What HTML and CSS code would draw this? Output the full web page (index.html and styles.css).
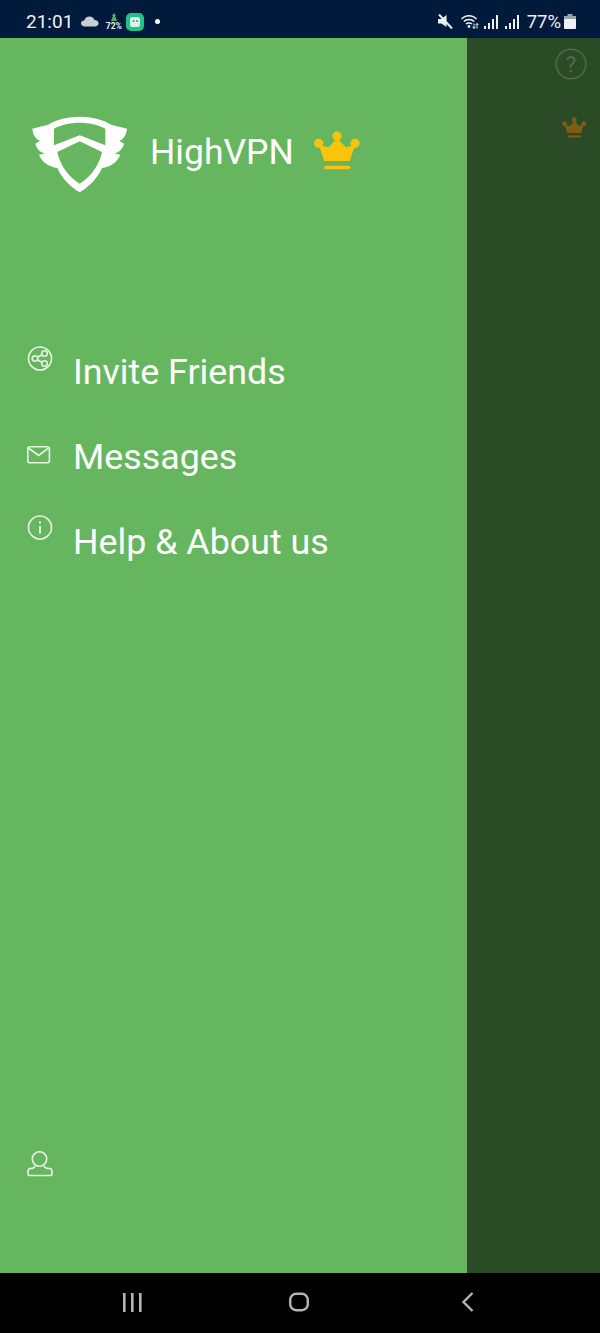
FILE: index.html
```html
<!DOCTYPE html>
<html lang="en">
<head>
	<meta charset="UTF-8">
	<meta name="viewport" content="width=device-width, initial-scale=1">

	<title>HighVPN</title>

	<link rel="stylesheet" href="styles.css">
</head>
<body>
	<svg class="defs" width="0" height="0">
		<symbol id="crown" viewBox="0 0 47 39">
			<circle cx="4.7" cy="12.3" r="4.6" />
			<circle cx="23" cy="5" r="4.6" />
			<circle cx="41" cy="12.3" r="4.6" />
			<path d="M5 14 L14.7 16.5 L23 7 L32 16.5 L41 14 L35.8 30 L10 30 Z" />
			<rect x="10.3" y="34.7" width="26" height="3.6" rx="1.5" />
		</symbol>
	</svg>

	<!-- status bar -->
	<div class="status">
		<span class="clock">21:01</span>
		<svg class="cloud" width="18" height="11" viewBox="0 0 18 11">
			<path fill="#c9ced4" d="M4 10.5 C1.5 10.5 0 9 0 7.3 C0 5.6 1.4 4.4 3.2 4.4 C4 2 6 .6 8.5 .6 C11 .6 12.8 2 13.4 4 C15.8 3.9 17.6 5.4 17.6 7.3 C17.6 9.2 16 10.5 14 10.5 Z" />
		</svg>
		<div class="rain">
			<svg width="8" height="9" viewBox="0 0 8 9">
				<path fill="#4fb06a" d="M4 0 L6 3 L5 3 L7 8 L1 8 L3 3 L2 3 Z" />
			</svg>
			<span>72%</span>
		</div>
		<svg class="app" width="18" height="18" viewBox="0 0 18 18">
			<rect width="18" height="18" rx="5" fill="#25c08a" />
			<rect x="4" y="4" width="10" height="10" rx="2.5" fill="#d8f5e8" />
			<circle cx="7.5" cy="8" r="1" fill="#25a078" />
			<circle cx="11" cy="8" r="1" fill="#25a078" />
		</svg>
		<span class="dot"></span>

		<div class="status-right">
			<svg width="15" height="15" viewBox="0 0 15 15">
				<path fill="#eef1f4" d="M0 5 H3.5 L8.5 1 V13 L3.5 9.5 H0 Z" />
				<path stroke="#eef1f4" stroke-width="2" d="M1 .5 L14 14.5" />
			</svg>
			<svg class="wifi" width="18" height="15" viewBox="0 0 18 15" fill="none" stroke="#eef1f4" stroke-width="1.5">
				<path d="M.5 5 C4.5 .5 11.5 .5 15.5 5" />
				<path d="M2.8 7.5 C5.5 4.8 10.5 4.8 13.2 7.5" />
				<path d="M5 10 C6.5 8.5 9.5 8.5 11 10" />
				<circle cx="8" cy="12.5" r=".7" />
				<path stroke-width="1" d="M13 9.5 V14.5 M14.5 12.8 L13 14.5 L11.5 12.8 M16 14.5 V9.5 M14.6 11 L16 9.5 L17.5 11" />
			</svg>
			<svg class="bars" width="14" height="14" viewBox="0 0 14 14" fill="#eef1f4">
				<rect x="0" y="11" width="2" height="3" />
				<rect x="4" y="8" width="2" height="6" />
				<rect x="8" y="4" width="2" height="10" />
				<rect x="12" y="0" width="2" height="14" />
			</svg>
			<svg class="bars" width="14" height="14" viewBox="0 0 14 14" fill="#eef1f4">
				<rect x="0" y="11" width="2" height="3" />
				<rect x="4" y="8" width="2" height="6" />
				<rect x="8" y="4" width="2" height="10" />
				<rect x="12" y="0" width="2" height="14" />
			</svg>
			<span class="percent">77%</span>
			<svg class="battery" width="12" height="15" viewBox="0 0 12 15">
				<rect x="3.5" y="0" width="5" height="3" fill="#9aa3ad" />
				<rect x="0" y="2" width="12" height="4" fill="#9aa3ad" />
				<rect x="0" y="5" width="12" height="10" rx="1" fill="#eef1f4" />
			</svg>
		</div>
	</div>

	<div class="screen">
		<!-- drawer -->
		<div class="drawer">
			<div class="brand">
				<svg class="logo" width="96" height="77" viewBox="12 12 288 231">
					<path fill="#fff" fill-rule="evenodd" d="M155 14 C120 14 85 22 60 38 L13 50 C15 68 22 80 36 86 L22 95 C26 112 38 122 52 124 L33 128 C42 150 62 165 88 168 C102 200 128 225 155 241 C182 225 208 200 222 168 C248 165 268 150 277 128 L258 124 C272 122 284 112 288 95 L274 86 C288 80 295 68 297 50 L250 38 C225 22 190 14 155 14 Z M155 32 C128 32 100 38 78 50 L78 100 L155 70 L232 100 L232 50 C210 38 182 32 155 32 Z M155 88 L88 120 C95 155 120 195 155 215 C190 195 215 155 222 120 Z" />
				</svg>
				<span class="brand-name">HighVPN</span>
				<svg class="crown-big" width="47" height="39"><use href="#crown" /></svg>
			</div>

			<div class="menu">
				<div class="menu-item">
					<svg class="menu-icon" width="26" height="26" viewBox="0 0 26 26" fill="none">
						<circle cx="13" cy="12.5" r="11.5" />
						<circle cx="8" cy="12.5" r="2.8" />
						<circle cx="17.5" cy="7.5" r="2.8" />
						<circle cx="17.5" cy="17.5" r="2.8" />
						<path d="M10.4 11.2 L15 8.8 M10.4 13.8 L15 16.2" />
					</svg>
					<span>Invite Friends</span>
				</div>
				<div class="menu-item">
					<svg class="menu-icon menu-mail" width="26" height="18" viewBox="0 0 26 18" fill="none">
						<rect x=".8" y=".8" width="21.6" height="16" rx="2" />
						<path d="M1.5 2 L11.6 9.5 L21.7 2" />
					</svg>
					<span>Messages</span>
				</div>
				<div class="menu-item">
					<svg class="menu-icon menu-info" width="26" height="26" viewBox="0 0 26 26" fill="none">
						<circle cx="13" cy="12.5" r="11.5" />
						<path stroke-width="2" d="M13 11 V18.5 M13 6.5 V8.5" />
					</svg>
					<span>Help &amp; About us</span>
				</div>
			</div>

			<svg class="user" width="26" height="26" viewBox="0 0 26 26" fill="none">
				<circle cx="12.5" cy="8" r="7.2" />
				<path d="M8 15 C7.5 17 6 17.5 3.5 17.5 C2 17.5 1 18.7 1 20.5 V23 C1 24 1.5 24.5 2.5 24.5 H23.5 C24.5 24.5 25 24 25 23 V20.5 C25 18.7 24 17.5 22.5 17.5 C19 17.5 17.5 17 17 15" />
			</svg>
		</div>

		<!-- dimmed main page behind the drawer -->
		<div class="scrim">
			<svg class="help" width="32" height="32" viewBox="0 0 32 32">
				<circle cx="16" cy="16" r="14.8" fill="none" stroke="#4f6b4b" stroke-width="1.5" />
				<text x="16" y="23.5" text-anchor="middle">?</text>
			</svg>
			<svg class="crown-small" width="25" height="21"><use href="#crown" /></svg>
		</div>
	</div>

	<!-- android nav bar -->
	<div class="navbar">
		<svg width="20" height="19" viewBox="0 0 20 19" fill="#b4b4b4">
			<rect x="1" y="0" width="2.6" height="19" />
			<rect x="9" y="0" width="2.6" height="19" />
			<rect x="17" y="0" width="2.6" height="19" />
		</svg>
		<svg class="home" width="20" height="20" viewBox="0 0 20 20" fill="none" stroke="#b4b4b4" stroke-width="2.4">
			<rect x="1.2" y="1.8" width="17.6" height="16.4" rx="6" />
		</svg>
		<svg width="14" height="20" viewBox="0 0 14 20" fill="none" stroke="#b4b4b4" stroke-width="2.4">
			<path d="M12.5 1 L3.5 10 L12.5 19" />
		</svg>
	</div>
</body>
</html>
```

FILE: styles.css
```css
* {
	margin: 0;
	padding: 0;
	box-sizing: border-box;
}

html, body {
	height: 100%;
}

body {
	display: flex;
	flex-direction: column;
	font-family: Roboto, sans-serif;
	background: #000;
	overflow: hidden;
}

.defs {
	position: absolute;
}

.status {
	display: flex;
	align-items: center;
	flex: 0 0 38px;
	padding: 5px 24px 0 26px;
	background: #001a3b;
	color: #eef1f4;
}

.clock {
	font-size: 19px;
	margin-right: 8px;
}

.cloud {
	margin-right: 6px;
}

.rain {
	display: flex;
	flex-direction: column;
	align-items: center;
	width: 17px;
	margin-right: 4px;
	line-height: 8px;
}

.rain span {
	font-size: 8.5px;
	font-weight: 700;
}

.app {
	margin-right: 11px;
}

.dot {
	width: 5px;
	height: 5px;
	border-radius: 50%;
	background: #fff;
}

.status-right {
	display: flex;
	align-items: center;
	margin-left: auto;
}

.wifi {
	margin-left: 8px;
}

.bars {
	margin-left: 5px;
}

.bars + .bars {
	margin-left: 7px;
}

.percent {
	font-size: 18.5px;
	margin-left: 8px;
}

.battery {
	margin-left: 3px;
}

.screen {
	display: flex;
	flex: 1;
	min-height: 0;
}

.drawer {
	display: flex;
	flex-direction: column;
	width: 467px;
	padding: 78px 0 96px 27px;
	background: #66b65f;
	color: #fff;
}

.brand {
	display: flex;
	align-items: center;
	margin-left: 5px;
}

.brand-name {
	font-size: 35.5px;
	margin: 0 20px 6px 22px;
}

.crown-big {
	margin-bottom: 8px;
	fill: #fcc30b;
}

.menu {
	margin-top: 137px;
}

.menu-item {
	display: flex;
	align-items: flex-start;
	height: 85px;
	font-size: 35.8px;
	line-height: 85px;
}

.menu-icon {
	margin: 16px 20px 0 0;
}

.menu-mail {
	margin-top: 31px;
}

.menu-info {
	margin-top: 15px;
}

.menu-icon, .user {
	stroke: #e6f3e4;
	stroke-width: 1.6;
}

.user {
	margin-top: auto;
}

.scrim {
	display: flex;
	flex-direction: column;
	align-items: flex-end;
	flex: 1;
	padding: 10px 13px 0 0;
	background: #2b4a26;
}

.help text {
	font-family: Roboto, sans-serif;
	font-size: 22px;
	fill: #4f6b4b;
}

.crown-small {
	margin-top: 37px;
	fill: #7c5d12;
}

.navbar {
	display: flex;
	align-items: center;
	justify-content: space-between;
	flex: 0 0 60px;
	padding: 0 126px 2px 122px;
	background: #000;
}

.home {
	margin-right: 4px;
}
```
